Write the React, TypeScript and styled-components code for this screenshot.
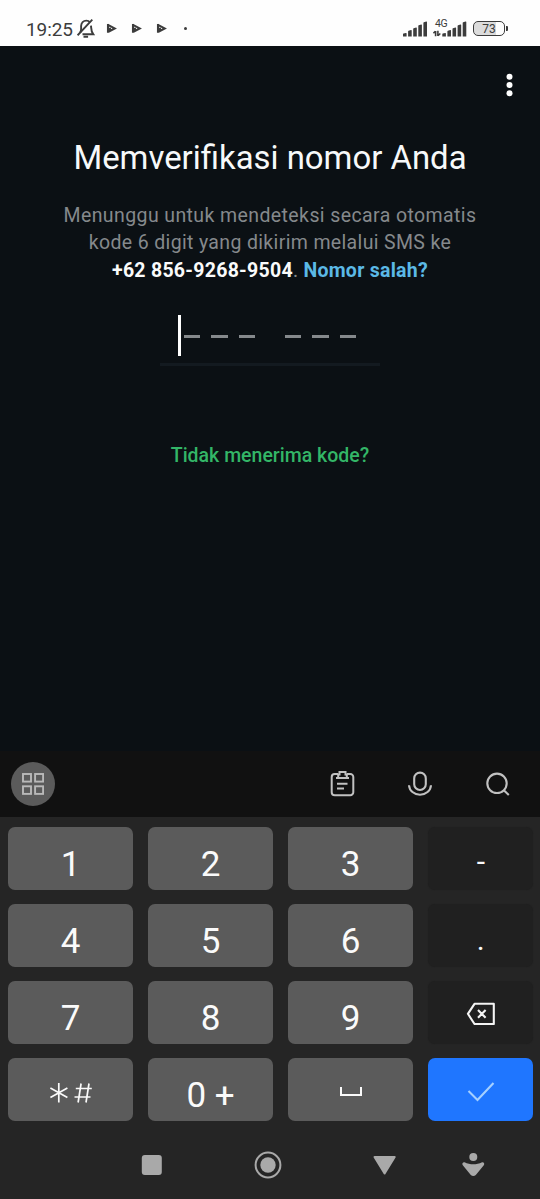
import React from 'react';
import styled, { createGlobalStyle } from 'styled-components';

const GlobalStyle = createGlobalStyle`
  * { box-sizing: border-box; }
  body { margin: 0; background: #252525; font-family: Roboto, "Liberation Sans", sans-serif; }
  svg { display: block; flex: none; }
`;

const Screen = styled.div`
  width: 540px;
  height: 1199px;
  display: flex;
  flex-direction: column;
  overflow: hidden;
  background: #252525;
`;

const StatusBar = styled.header`
  height: 46px;
  flex: none;
  display: flex;
  justify-content: space-between;
  padding: 0 32px 0 26px;
  background: #fefefe;
  color: #3c3c3c;
`;

const StatusGroup = styled.div`
  display: flex;
  align-items: flex-start;
`;

const SignalSlot = styled.div`
  padding-top: 21px;
`;

const Clock = styled.span`
  width: 51px;
  padding-top: 18px;
  font-size: 19px;
  line-height: 24px;
  letter-spacing: -0.1px;
  white-space: nowrap;
`;

const Network = styled.div`
  display: flex;
  flex-direction: column;
  width: 34px;
  margin: 18px 6px 0 6px;
`;

const NetworkLabel = styled.span`
  height: 2px;
  padding-left: 2px;
  font-size: 10.5px;
  line-height: 11px;
  letter-spacing: -0.3px;
`;

const Battery = styled.div`
  display: flex;
  align-items: center;
  margin-top: 21px;
`;

const BatteryCell = styled.div<{ $level: number }>`
  width: 32px;
  height: 15px;
  border: 1.5px solid #3c3c3c;
  border-radius: 5px;
  background: linear-gradient(90deg, #dcdcdc ${p => p.$level}%, #fefefe ${p => p.$level}%);
  font-size: 12px;
  line-height: 14px;
  text-align: center;
`;

const BatteryTip = styled.div`
  width: 2px;
  height: 5px;
  margin-left: 1px;
  border-radius: 0 1px 1px 0;
  background: #3c3c3c;
`;

const Page = styled.main`
  height: 705px;
  flex: none;
  display: flex;
  flex-direction: column;
  align-items: center;
  background: #0b1014;
`;

const AppBar = styled.div`
  width: 100%;
  height: 92px;
  flex: none;
  display: flex;
  justify-content: flex-end;
  padding: 27px 26px 0 0;
`;

const Title = styled.h1`
  margin: 0;
  height: 40px;
  color: #f7f9fa;
  font-size: 32.9px;
  font-weight: 400;
  line-height: 40px;
  white-space: nowrap;
`;

const Message = styled.p`
  margin: 23.6px 0 0;
  color: #85898c;
  font-size: 19.5px;
  line-height: 27.5px;
  text-align: center;
`;

const Line = styled.span<{ $spacing?: number }>`
  display: block;
  white-space: nowrap;
  letter-spacing: ${p => p.$spacing ?? 0.4}px;
`;

const Phone = styled.b`
  color: #fafbfb;
  font-weight: 700;
`;

const WrongNumber = styled.b`
  color: #5bb9e6;
  font-weight: 700;
`;

const CodeField = styled.div`
  width: 220px;
  height: 52px;
  margin-top: 29.9px;
  padding: 1px 0 0 18px;
  display: flex;
  align-items: flex-start;
  border-bottom: 3px solid #131a20;
`;

const Caret = styled.div`
  width: 3px;
  height: 41px;
  flex: none;
  margin-right: 3px;
  background: #fff;
`;

const DigitGroup = styled.div`
  display: flex;
  flex: none;
  gap: 11.2px;
  margin-top: 20px;

  & + & {
    margin-left: 29.7px;
  }
`;

const DigitSlot = styled.div`
  width: 16.3px;
  height: 3px;
  background: #85898c;
`;

const ResendLink = styled.div`
  margin-top: 76px;
  color: #33b667;
  font-size: 19.5px;
  font-weight: 500;
  line-height: 28px;
  white-space: nowrap;
`;

const KeyboardTools = styled.div`
  height: 66px;
  flex: none;
  display: flex;
  align-items: center;
  padding: 0 27px 0 11px;
  background: #111;
`;

const AppsButton = styled.div`
  width: 44px;
  height: 44px;
  margin-right: auto;
  display: flex;
  align-items: center;
  justify-content: center;
  border-radius: 50%;
  background: #5b5b5b;
`;

const ToolIcon = styled.div`
  width: 30px;
  height: 30px;
  margin-left: 47.7px;
`;

const Keypad = styled.div`
  flex: none;
  display: grid;
  grid-template-columns: 125px 125px 125px 105px;
  grid-auto-rows: 63px;
  column-gap: 15.1px;
  row-gap: 14px;
  padding: 10px 0 0 8px;
`;

type KeyTone = 'digit' | 'side' | 'accent';
const toneColor: Record<KeyTone, string> = { digit: '#5b5b5b', side: '#202020', accent: '#1f76ff' };

const Key = styled.div<{ $tone: KeyTone; $size?: number; $drop?: number }>`
  display: flex;
  align-items: center;
  justify-content: center;
  padding-top: ${p => p.$drop ?? 0}px;
  border-radius: 7px;
  background: ${p => toneColor[p.$tone]};
  box-shadow: ${p => (p.$tone === 'side' ? '0 0 1px #1e1e1e' : 'none')};
  color: #fafafa;
  font-size: ${p => p.$size ?? 35}px;
  line-height: 40px;
  white-space: pre;
`;

const NavBar = styled.nav`
  flex: none;
  display: flex;
  align-items: center;
  margin-top: 29px;
  padding-left: 137px;
  height: 30px;
`;

const NavItem = styled.div<{ $gap: number }>`
  width: 30px;
  height: 30px;
  margin-right: ${p => p.$gap}px;
`;

const barPath = (x: number, bottom: number, h: number) =>
  `M${x} ${bottom - h + 0.9}q0-.5.5-.6l2.400-.7q.7-.1.7.5V${bottom}h-3.600z`;

const SignalBars = () => (
  <svg width="24" height="16" viewBox="0 0 24 16" fill="#3c3c3c">
    {[3.2, 6, 8.6, 11.6, 14.6].map((h, i) => (
      <path key={h} d={barPath(i * 5.1, 15.5, h)} />
    ))}
  </svg>
);

const StatusIcons = () => (
  <svg width="112" height="46" viewBox="77 0 112 46" fill="none" stroke="#3c3c3c" strokeWidth="1.9">
    <path d="M80.2 32.6C81.7 30.6 81 28 81.1 26c.2-3 2.2-5.400 5.200-5.400 1.600 0 2.900.7 3.700 1.700M91 25.600c.300 3-.1 5.600 2.200 8.600H82.500" />
    <path d="M77.600 35.300 92.300 19.600M83.500 36.800h4.600" />
    {[107, 132, 157].map(x => (
      <path key={x} d={`M${x + 1} 24v8.800M${x + 0.5} 24.600l7.200 3.800-4.800 2.600v-3.200`} strokeWidth="2.1" />
    ))}
    <circle cx="185.500" cy="28.500" r="1.500" fill="#3c3c3c" stroke="none" />
  </svg>
);

const keys = [['1', '2', '3', '-'], ['4', '5', '6', '.'], ['7', '8', '9']];
const sideDrop: Record<string, number> = { '-': 7, '.': 9 };

export default function App() {
  return (
    <Screen>
      <GlobalStyle />
      <StatusBar>
        <StatusGroup>
          <Clock>19:25</Clock>
          <StatusIcons />
        </StatusGroup>
        <StatusGroup>
          <SignalSlot><SignalBars /></SignalSlot>
          <Network>
            <NetworkLabel>4G</NetworkLabel>
            <svg width="34" height="18" viewBox="0 0 34 18" fill="#3c3c3c">
              <path d="M2.600 11v5.300M.4 13.200l2-2M4.900 10.800v5.200M5 15.800l2.300-2.300" fill="none" stroke="#3c3c3c" strokeWidth="1.600" />
              {[3.2, 6, 8.6, 11.6, 14.6].map((h, i) => (
                <path key={h} d={barPath(9.3 + i * 5.1, 16.5, h)} />
              ))}
            </svg>
          </Network>
          <Battery>
            <BatteryCell $level={73}>73</BatteryCell>
            <BatteryTip />
          </Battery>
        </StatusGroup>
      </StatusBar>

      <Page>
        <AppBar>
          <svg width="9" height="24" viewBox="0 0 9 24" fill="#fff">
            <circle cx="4.500" cy="3.700" r="3" />
            <circle cx="4.500" cy="12" r="3" />
            <circle cx="4.500" cy="20.200" r="3" />
          </svg>
        </AppBar>
        <Title>Memverifikasi nomor Anda</Title>
        <Message>
          <Line>Menunggu untuk mendeteksi secara otomatis</Line>
          <Line $spacing={0.35}>kode 6 digit yang dikirim melalui SMS ke</Line>
          <Line $spacing={0.27}><Phone>+62 856-9268-9504</Phone>. <WrongNumber>Nomor salah?</WrongNumber></Line>
        </Message>
        <CodeField>
          <Caret />
          {[0, 1].map(group => (
            <DigitGroup key={group}>
              <DigitSlot /><DigitSlot /><DigitSlot />
            </DigitGroup>
          ))}
        </CodeField>
        <ResendLink>Tidak menerima kode?</ResendLink>
      </Page>

      <KeyboardTools>
        <AppsButton>
          <svg width="22" height="22" viewBox="0 0 22 22" fill="none" stroke="#b9b9b9" strokeWidth="1.900">
            <rect x="1" y="1" width="8" height="7.600" /><rect x="13.100" y="1" width="8" height="7.600" />
            <rect x="1" y="13.300" width="8" height="7.600" /><rect x="13.100" y="13.300" width="8" height="7.600" />
          </svg>
        </AppsButton>
        <ToolIcon>
          <svg width="30" height="30" viewBox="0.5 0 30 30" fill="none" stroke="#c1c1c1" strokeWidth="2">
            <path d="M10.500 5H7.200a3 3 0 0 0-3 3v15.200a3 3 0 0 0 3 3h15.600a3 3 0 0 0 3-3V8a3 3 0 0 0-3-3h-3.300" />
            <path d="M8.500 9h13M10.700 9V5.600h1.300V3h6v2.600h1.300V9M9.500 14.800h10.500M9.500 19.500h7" />
          </svg>
        </ToolIcon>
        <ToolIcon>
          <svg width="30" height="30" viewBox="0 0 30 30" fill="none" stroke="#c1c1c1" strokeWidth="2.100">
            <rect x="9.200" y="3.600" width="11.600" height="17.400" rx="5.800" />
            <path d="M4 16.200c.3 5.500 5.200 9.600 11 9.600s10.700-4.100 11-9.600" />
          </svg>
        </ToolIcon>
        <ToolIcon>
          <svg width="30" height="30" viewBox="0 0 30 30" fill="none" stroke="#c1c1c1" strokeWidth="2.100">
            <circle cx="14" cy="14.300" r="9.700" />
            <path d="m20.800 21.200 5 4.800" />
          </svg>
        </ToolIcon>
      </KeyboardTools>

      <Keypad>
        {keys.flat().map(label => (
          <Key
            key={label}
            $tone={label in sideDrop ? 'side' : 'digit'}
            $size={label in sideDrop ? 30 : 35}
            $drop={sideDrop[label] ?? 12}
          >
            {label}
          </Key>
        ))}
        <Key $tone="side">
          <svg width="30" height="24" viewBox="0 0 30 24" fill="none" stroke="#f4f4f4" strokeWidth="2.100" strokeLinejoin="round">
            <path d="M8.500 2h19.300v20.200H8.500L1.900 12z M12 8.200l7.600 7.800M19.600 8.200l-7.600 7.800" transform="translate(0 .8)" />
          </svg>
        </Key>
        <Key $tone="digit" $drop={6}>
          <svg width="44" height="22" viewBox="0 0 44 22" fill="none" stroke="#fafafa" strokeWidth="1.700">
            <path d="M9.800 1v19.500M1.400 6l17 9.500M18.400 6l-17 9.500M32.100 1.500l-3 19M40 1.500l-3 19M26.800 6.500h16M25.500 15h16" />
          </svg>
        </Key>
        <Key $tone="digit" $drop={12}>0 +</Key>
        <Key $tone="digit" $drop={2}>
          <svg width="24" height="12" viewBox="0 0 24 12" fill="none" stroke="#fafafa" strokeWidth="2">
            <path d="M2 2v8h20V2" />
          </svg>
        </Key>
        <Key $tone="accent" $drop={2}>
          <svg width="28" height="22" viewBox="0 0 28 22" fill="none" stroke="#a5d0ff" strokeWidth="2.100">
            <path d="m1.500 11 9 9L26.500 3" />
          </svg>
        </Key>
      </Keypad>

      <NavBar>
        <NavItem $gap={86}>
          <svg width="30" height="30" viewBox="0 0 30 30"><rect x="4.800" y="5" width="20" height="20" rx="3" fill="#a9a9a9" /></svg>
        </NavItem>
        <NavItem $gap={87}>
          <svg width="30" height="30" viewBox="0 0 30 30">
            <circle cx="15" cy="15" r="12.400" fill="none" stroke="#a9a9a9" strokeWidth="2" />
            <circle cx="15" cy="15" r="7.700" fill="#a9a9a9" />
          </svg>
        </NavItem>
        <NavItem $gap={58}>
          <svg width="30" height="30" viewBox="0 0 30 30"><path d="M4.500 7h20.200L14.600 23.500z" fill="#a9a9a9" stroke="#a9a9a9" strokeWidth="2" strokeLinejoin="round" /></svg>
        </NavItem>
        <NavItem $gap={0}>
          <svg width="30" height="30" viewBox="0 0 30 30" fill="#a9a9a9">
            <circle cx="15.300" cy="7" r="4" />
            <path d="M6.500 12.200c5.800 2.700 11.800 2.700 17.600 0 1.800-.3 2.800 1.600 1.700 3.100l-8 9.600c-1.500 1.500-3.500 1.500-5 0l-8-9.600c-1.100-1.500-.1-3.400 1.700-3.100z" />
          </svg>
        </NavItem>
      </NavBar>
    </Screen>
  );
}
